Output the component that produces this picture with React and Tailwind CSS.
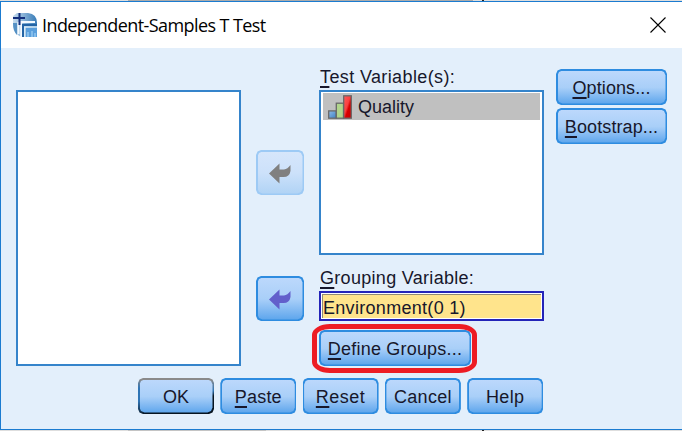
import React from "react";

const bevel =
  "[clip-path:polygon(5px_0,calc(100%-5px)_0,calc(100%-1.5px)_1.5px,100%_5px,100%_calc(100%-5px),calc(100%-1.5px)_calc(100%-1.5px),calc(100%-5px)_100%,5px_100%,1.5px_calc(100%-1.5px),0_calc(100%-5px),0_5px,1.5px_1.5px)]";

function Label({ text, hot }) {
  return hot ? (
    <>
      <span className="underline decoration-[1.5px] underline-offset-[3px] [text-decoration-skip-ink:none]">{text[0]}</span>
      {text.slice(1)}
    </>
  ) : (
    text
  );
}

function Button({ children, className = "", frame = "bg-[#2e8ce0]", fill = "from-[#bcd8fc] via-[#a9cff8] to-[#5ca5ec]" }) {
  return (
    <button className={`${bevel} ${frame} shrink-0 p-[1.5px] ${className}`}>
      <span className={`${bevel} ${fill} flex h-full w-full items-center justify-center bg-linear-to-b pt-[2px] whitespace-pre`}>
        <span>{children}</span>
      </span>
    </button>
  );
}

function Arrow({ color }) {
  return (
    <svg width="22" height="21" viewBox="0 0 22 21" fill={color}>
      <path d="M0 10.5 10.5 0.5V6.5H15Q18.5 6 21.5 2V8Q20.5 14 14.5 14H10.5V20.5Z" />
    </svg>
  );
}

function AppIcon() {
  return (
    <svg width="24" height="24" viewBox="0 0 24 24" className="shrink-0">
      <defs>
        <linearGradient id="sky" x1="0" y1="0" x2="1" y2="0">
          <stop offset="0" stopColor="#c7ddef" />
          <stop offset="1" stopColor="#367ab6" />
        </linearGradient>
      </defs>
      <path d="M4 0H15Q24 1 24 10V24H10Q0 22 0 12V3Z" fill="url(#sky)" />
      <path d="M0 10H4V22Q0 18 0 10Z" fill="#5490c4" />
      <path d="M5.5 9V21M8.2 24V9H22" stroke="#f4faff" strokeWidth="2" fill="none" />
      <path d="M10 24V12H24" stroke="#2364a5" strokeWidth="2" fill="none" />
      <path d="M11.8 24V14H24" stroke="#d9edfa" strokeWidth="1.5" fill="none" />
      <path d="M13 15H24V24H13Z" fill="#5a9fdc" />
      <path d="M14 24V19H16V24M18 24V18H20V24M21 24V20H23V24" fill="#84bdeb" />
      <path d="M0 5H12M6.5 0V12" stroke="#132f7c" strokeWidth="2" />
    </svg>
  );
}

function ScaleIcon() {
  return (
    <svg width="24" height="24" viewBox="0 0 24 24" className="shrink-0">
      <defs>
        <linearGradient id="blue" x1="0" y1="0" x2="1" y2="1">
          <stop offset="0" stopColor="#8fbce8" />
          <stop offset="1" stopColor="#3c7fc4" />
        </linearGradient>
        <linearGradient id="red" x1="0" y1="0" x2="1" y2="1">
          <stop offset="0" stopColor="#ff5a5a" />
          <stop offset="0.45" stopColor="#f94040" />
          <stop offset="0.6" stopColor="#d90000" />
          <stop offset="1" stopColor="#c80000" />
        </linearGradient>
      </defs>
      <g stroke="#686868" strokeWidth="1.3">
        <rect x="0.7" y="15.9" width="7.6" height="7.3" fill="url(#blue)" />
        <rect x="8.3" y="8.2" width="7.2" height="15" fill="#b1d58c" />
        <rect x="15.7" y="0.8" width="7.6" height="22.4" fill="url(#red)" />
      </g>
    </svg>
  );
}

export default function App() {
  return (
    <div className="flex h-[431px] w-[682px] flex-col overflow-hidden bg-[#dedede] font-['Liberation_Sans',Arial,sans-serif] text-[18px] leading-[20px] text-[#17172b]">
      <div className="flex h-px shrink-0 bg-[#dedede]">
        <div className="ml-[128px] h-px w-[345px] bg-[#ababab]" />
        <div className="ml-[9px] h-px w-[2px] bg-[#222222]" />
      </div>
      <div className="flex h-[429px] shrink-0 flex-col border-y border-l border-[#1b7bd0] bg-[#e3effb]">
        <header className="flex h-[46px] shrink-0 items-center bg-white pr-[16px] pl-[12px]">
          <AppIcon />
          <h1 className="ml-[5px] font-['Open_Sans','Noto_Sans',sans-serif] text-[18px] tracking-[-0.58px] whitespace-pre text-black">Independent-Samples T Test</h1>
          <svg width="16" height="16" viewBox="0 0 16 16" className="ml-auto" stroke="#000000" strokeWidth="1.1">
            <path d="M0.5 0.5 15.5 15.5M15.5 0.5 0.5 15.5" />
          </svg>
        </header>

        <main className="flex h-[318px] shrink-0 pl-[15px]">
          <div className="mt-[42px] h-[276px] w-[225px] shrink-0 border-2 border-[#3584cb] bg-white" />

          <div className="ml-[15px] flex w-[48px] shrink-0 flex-col pt-[102px]">
            <Button className="h-[45px] w-[48px]" frame="bg-[#9dcaf5]" fill="from-[#d6e6fb] via-[#cce1fa] to-[#b0d3f5]">
              <Arrow color="#808080" />
            </Button>
            <Button className="mt-[81px] h-[45px] w-[48px]">
              <Arrow color="#625fcb" />
            </Button>
          </div>

          <div className="ml-[15px] flex w-[225px] shrink-0 flex-col pt-[19px]">
            <div className="h-[23px] pl-px tracking-[0.38px] whitespace-pre"><Label text="Test Variable(s):" hot /></div>
            <div className="h-[165px] shrink-0 border-2 border-[#3584cb] bg-white px-[2px] pt-px">
              <div className="flex h-[27px] items-center bg-[#c0c0c0] pl-[5px]">
                <ScaleIcon />
                <span className="ml-[6px] pt-px">Quality</span>
              </div>
            </div>
            <div className="h-[36px] shrink-0 pt-[13px] pl-px tracking-[0.3px] whitespace-pre"><Label text="Grouping Variable:" hot /></div>
            <div className="h-[30px] shrink-0 border-2 border-[#2424b8] bg-white p-px">
              <div className="flex h-full items-center border-t border-l border-[#8f8a78] bg-[#ffe48c] pt-[3px] tracking-[0.3px] whitespace-pre">Environment(0 1)</div>
            </div>
            <div className="relative mt-[9px] h-[36px] w-[152px] shrink-0">
              <Button className="h-full w-full tracking-[0.2px]"><Label text="Define Groups..." hot /></Button>
              <div className="absolute -top-[6px] -left-[7px] h-[49px] w-[165px] rounded-[18px/11px] border-[5px] border-[#ed1c24]" />
            </div>
          </div>

          <div className="ml-[12px] flex flex-col gap-[3px] pt-[21px]">
            <Button className="h-[36px] w-[111px] tracking-[0.1px]"><Label text="Options..." hot /></Button>
            <Button className="h-[36px] w-[111px] tracking-[0.1px]"><Label text="Bootstrap..." hot /></Button>
          </div>
        </main>

        <footer className="flex gap-[6.3px] pt-[12px] pl-[137px]">
          <Button className="h-[36px] w-[76px]" frame="bg-[conic-gradient(from_90deg,#071420_0deg,#071420_150deg,#2e74b5_172deg,#2e74b5_192deg,#8a8a8a_205deg,#8a8a8a_335deg,#2e74b5_352deg,#071420_360deg)]">OK</Button>
          <Button className="h-[36px] w-[76px] tracking-[0.2px]"><Label text="Paste" hot /></Button>
          <Button className="h-[36px] w-[76px] tracking-[0.5px]"><Label text="Reset" hot /></Button>
          <Button className="h-[36px] w-[76px] tracking-[0.3px]">Cancel</Button>
          <Button className="h-[36px] w-[76px] tracking-[0.4px]">Help</Button>
        </footer>
      </div>
      <div className="flex h-px shrink-0">
        <div className="ml-[128px] h-px w-[138px] bg-[#c4c4c4]" />
        <div className="ml-[216px] h-px w-[2px] bg-[#222222]" />
      </div>
    </div>
  );
}
